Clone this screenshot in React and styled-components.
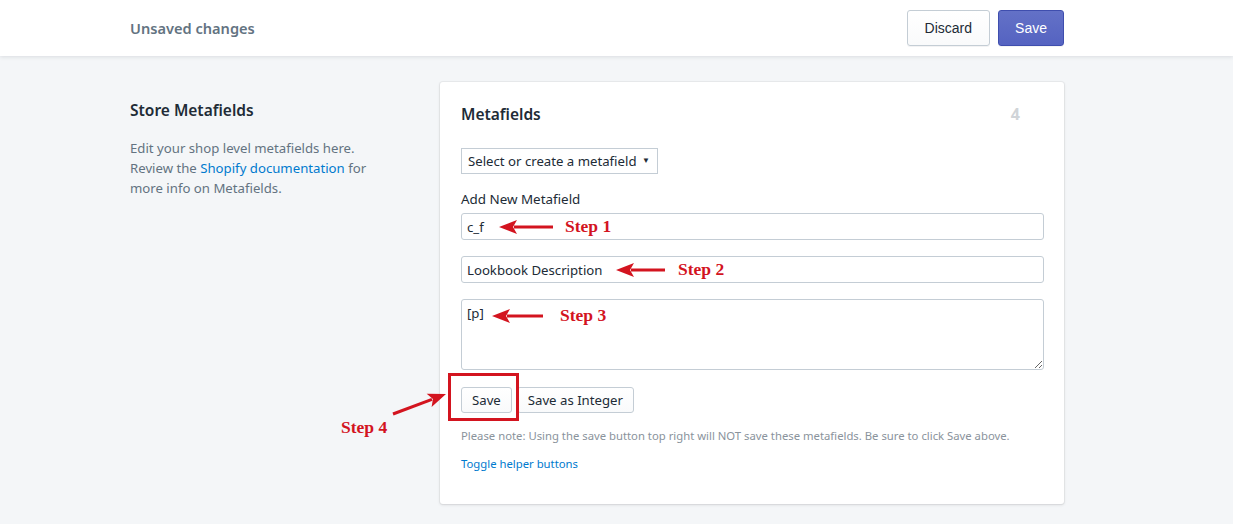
import React from 'react';
import styled, { createGlobalStyle } from 'styled-components';

const GlobalStyle = createGlobalStyle`
  html, body {
    margin: 0;
    padding: 0;
    background: #f4f6f8;
    font-family: "Noto Sans", "Open Sans", sans-serif;
    color: #212b36;
  }
`;

const RED = '#d3141f';

function App() {
  return (
    <Page>
      <GlobalStyle />
      <TopBar>
        <TopBarInner>
          <TopTitle>Unsaved changes</TopTitle>
          <TopActions>
            <HeaderButton>Discard</HeaderButton>
            <HeaderButton primary>Save</HeaderButton>
          </TopActions>
        </TopBarInner>
      </TopBar>

      <Layout>
        <Aside>
          <AsideTitle>Store Metafields</AsideTitle>
          <AsideText>
            Edit your shop level metafields here.
            <br />
            Review the <Link href="#">Shopify documentation</Link> for
            <br />
            more info on Metafields.
          </AsideText>
        </Aside>

        <Card>
          <CardHeader>
            <CardTitle>Metafields</CardTitle>
            <Count>4</Count>
          </CardHeader>

          <Select>
            <span>Select or create a metafield</span>
            <Caret>▼</Caret>
          </Select>

          <Label>Add New Metafield</Label>
          <Field>
            <Input defaultValue="c_f" />
            <Input defaultValue="Lookbook Description" />
            <TextArea defaultValue="[p]" />
          </Field>

          <ButtonRow>
            <SmallButton>Save</SmallButton>
            <SmallButton>Save as Integer</SmallButton>
          </ButtonRow>

          <Note>
            Please note: Using the save button top right will NOT save these metafields. Be sure to click Save above.
          </Note>
          <SmallLink href="#">Toggle helper buttons</SmallLink>
        </Card>
      </Layout>

      <Overlay>
        <svg width="1233" height="524" viewBox="0 0 1233 524">
          <Arrow x1={553} y1={227} x2={499} y2={227} />
          <Arrow x1={665} y1={270} x2={616} y2={270} />
          <Arrow x1={543} y1={316} x2={492} y2={316} />
          <Arrow x1={393} y1={414} x2={446} y2={394} />
          <rect x="449.5" y="374.5" width="68" height="45" fill="none" stroke={RED} strokeWidth="3" />
        </svg>
        <Step style={{ left: 565, top: 215 }}>Step 1</Step>
        <Step style={{ left: 678, top: 258 }}>Step 2</Step>
        <Step style={{ left: 560, top: 304 }}>Step 3</Step>
        <Step style={{ left: 341, top: 416 }}>Step 4</Step>
      </Overlay>
    </Page>
  );
}

function Arrow({ x1, y1, x2, y2 }) {
  const dx = x2 - x1;
  const dy = y2 - y1;
  const len = Math.sqrt(dx * dx + dy * dy);
  const ux = dx / len;
  const uy = dy / len;
  const head = 18;
  const half = 7;
  const bx = x2 - ux * head;
  const by = y2 - uy * head;
  const p1 = `${x2},${y2}`;
  const p2 = `${bx - uy * half},${by + ux * half}`;
  const p3 = `${bx + uy * half},${by - ux * half}`;
  const notch = `${x2 - ux * (head - 4)},${y2 - uy * (head - 4)}`;
  return (
    <g>
      <line x1={x1} y1={y1} x2={bx + ux * 3} y2={by + uy * 3} stroke={RED} strokeWidth="3" />
      <polygon points={`${p1} ${p2} ${notch} ${p3}`} fill={RED} />
    </g>
  );
}

export default App;

const Page = styled.div`
  position: relative;
  min-height: 524px;
`;

const TopBar = styled.header`
  height: 56px;
  background: #fff;
  box-shadow: 0 1px 4px rgba(33, 43, 54, 0.12);
  position: relative;
  z-index: 1;
`;

const TopBarInner = styled.div`
  width: 934px;
  margin-left: 130px;
  height: 100%;
  display: flex;
  align-items: center;
  justify-content: space-between;
`;

const TopTitle = styled.div`
  font-size: 14.6px;
  font-weight: 600;
  color: #637381;
`;

const TopActions = styled.div`
  display: flex;
  gap: 8px;
`;

const HeaderButton = styled.button`
  height: 36px;
  padding: 0 ${p => (p.primary ? '16px' : '17px')};
  font-family: "Liberation Sans", Arial, sans-serif;
  font-size: 14px;
  border-radius: 3px;
  cursor: pointer;
  color: ${p => (p.primary ? '#fff' : '#212b36')};
  border: 1px solid ${p => (p.primary ? '#3f4eae' : '#c4cdd5')};
  background: ${p =>
    p.primary
      ? 'linear-gradient(to bottom, #6371c7, #5563c1)'
      : 'linear-gradient(to bottom, #fff, #f9fafb)'};
  box-shadow: 0 1px 0 rgba(22, 29, 37, 0.05);
`;

const Layout = styled.main`
  display: flex;
  padding: 26px 0 20px 130px;
`;

const Aside = styled.section`
  width: 310px;
  padding-top: 16px;
`;

const AsideTitle = styled.h2`
  margin: 0 0 16px;
  font-size: 15.5px;
  font-weight: 600;
  line-height: 24px;
  color: #212b36;
`;

const AsideText = styled.p`
  margin: 0;
  font-size: 13.2px;
  line-height: 20px;
  color: #637381;
`;

const Link = styled.a`
  color: #007ace;
  text-decoration: none;
`;

const Card = styled.section`
  box-sizing: border-box;
  width: 624px;
  background: #fff;
  border-radius: 3px;
  box-shadow: 0 0 0 1px rgba(63, 63, 68, 0.05), 0 1px 3px 0 rgba(63, 63, 68, 0.15);
  padding: 22px 20px 32px 21px;
  display: flex;
  flex-direction: column;
  align-items: flex-start;
`;

const CardHeader = styled.div`
  align-self: stretch;
  display: flex;
  justify-content: space-between;
  align-items: center;
  padding-right: 24px;
  height: 20px;
`;

const CardTitle = styled.h3`
  margin: 0;
  font-size: 15.5px;
  font-weight: 600;
  line-height: 20px;
`;

const Count = styled.span`
  font-size: 16px;
  font-weight: 700;
  line-height: 20px;
  color: #d0d4d8;
`;

const Select = styled.div`
  margin-top: 24px;
  height: 26px;
  box-sizing: border-box;
  width: 197px;
  display: flex;
  align-items: center;
  justify-content: space-between;
  padding: 0 7px 0 6px;
  border: 1px solid #c4cdd5;
  font-size: 13.2px;
  color: #212b36;
`;

const Caret = styled.span`
  font-size: 8px;
  margin-top: -4px;
`;

const Label = styled.div`
  margin-top: 15px;
  font-size: 13.4px;
  line-height: 20px;
  color: #212b36;
`;

const Field = styled.div`
  align-self: stretch;
  margin-top: 4px;
  display: flex;
  flex-direction: column;
  gap: 16px;
`;

const inputBase = `
  box-sizing: border-box;
  width: 100%;
  border: 1px solid #c4cdd5;
  border-radius: 3px;
  font-family: "Noto Sans", sans-serif;
  font-size: 13.2px;
  color: #212b36;
  padding: 0 5px;
  background: #fff;
  outline: none;
`;

const Input = styled.input`
  ${inputBase}
  height: 27px;
`;

const TextArea = styled.textarea`
  ${inputBase}
  height: 71px;
  padding-top: 4px;
  resize: vertical;
  display: block;
  margin: 0;
`;

const ButtonRow = styled.div`
  margin-top: 17px;
  display: flex;
  gap: 5px;
`;

const SmallButton = styled.button`
  height: 26px;
  padding: 0 10px;
  font-family: "Noto Sans", sans-serif;
  font-size: 13.2px;
  color: #212b36;
  border: 1px solid #c4cdd5;
  border-radius: 3px;
  background: linear-gradient(to bottom, #fff, #f9fafb);
  cursor: pointer;
`;

const Note = styled.p`
  margin: 15px 0 0;
  font-size: 11.3px;
  line-height: 16px;
  color: #8a939c;
`;

const SmallLink = styled.a`
  margin-top: 12px;
  font-size: 11.3px;
  line-height: 16px;
  color: #007ace;
  text-decoration: none;
`;

const Overlay = styled.div`
  position: absolute;
  inset: 0;
  pointer-events: none;

  svg {
    position: absolute;
    left: 0;
    top: 0;
  }
`;

const Step = styled.span`
  position: absolute;
  font-family: "Liberation Serif", "DejaVu Serif", serif;
  font-weight: 700;
  font-size: 17.5px;
  line-height: 22px;
  color: ${RED};
`;
